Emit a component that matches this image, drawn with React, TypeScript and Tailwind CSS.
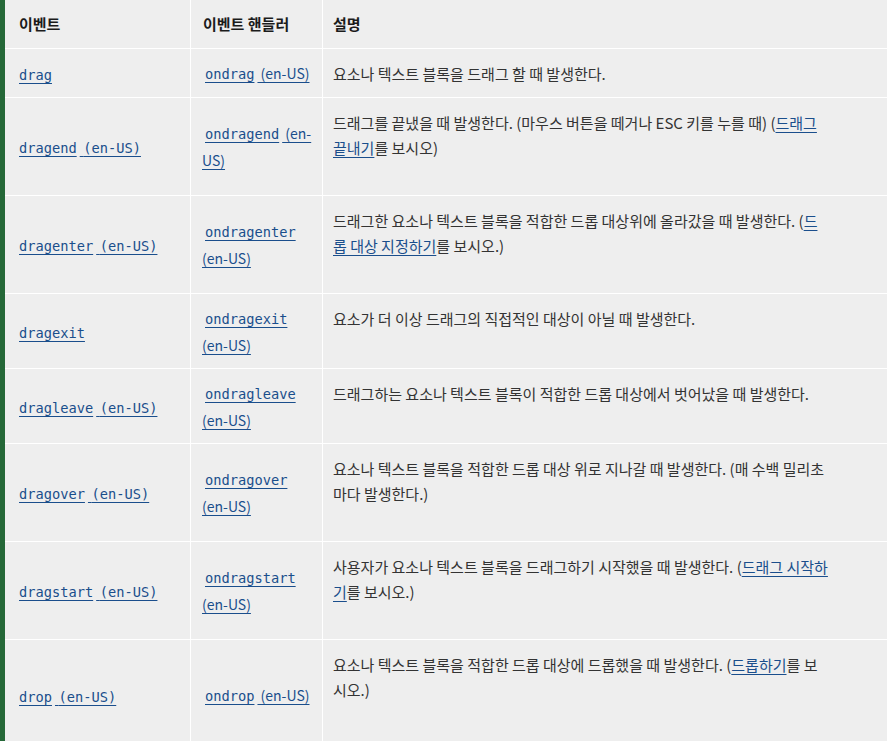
import React from "react";

type Row = {
  event: string;
  eventEn: boolean;
  handler: string;
  desc: React.ReactNode;
};

const link = "text-[#1a4e8c] underline underline-offset-[3px] decoration-1";
const mono = "px-[3px] font-['DejaVu_Sans_Mono',monospace] text-[13.7px]";

const L = ({ children }: { children: React.ReactNode }) => <a className={link}>{children}</a>;

const rows: Row[] = [
  { event: "drag", eventEn: false, handler: "ondrag", desc: "요소나 텍스트 블록을 드래그 할 때 발생한다." },
  {
    event: "dragend",
    eventEn: true,
    handler: "ondragend",
    desc: (
      <>
        드래그를 끝냈을 때 발생한다. (마우스 버튼을 떼거나 ESC 키를 누를 때) (<L>드래그 끝내기</L>를 보시오)
      </>
    ),
  },
  {
    event: "dragenter",
    eventEn: true,
    handler: "ondragenter",
    desc: (
      <>
        드래그한 요소나 텍스트 블록을 적합한 드롭 대상위에 올라갔을 때 발생한다. (<L>드롭 대상 지정하기</L>를 보시오.)
      </>
    ),
  },
  { event: "dragexit", eventEn: false, handler: "ondragexit", desc: "요소가 더 이상 드래그의 직접적인 대상이 아닐 때 발생한다." },
  {
    event: "dragleave",
    eventEn: true,
    handler: "ondragleave",
    desc: "드래그하는 요소나 텍스트 블록이 적합한 드롭 대상에서 벗어났을 때 발생한다.",
  },
  {
    event: "dragover",
    eventEn: true,
    handler: "ondragover",
    desc: "요소나 텍스트 블록을 적합한 드롭 대상 위로 지나갈 때 발생한다. (매 수백 밀리초마다 발생한다.)",
  },
  {
    event: "dragstart",
    eventEn: true,
    handler: "ondragstart",
    desc: (
      <>
        사용자가 요소나 텍스트 블록을 드래그하기 시작했을 때 발생한다. (<L>드래그 시작하기</L>를 보시오.)
      </>
    ),
  },
  {
    event: "drop",
    eventEn: true,
    handler: "ondrop",
    desc: (
      <>
        요소나 텍스트 블록을 적합한 드롭 대상에 드롭했을 때 발생한다. (<L>드롭하기</L>를 보시오.)
      </>
    ),
  },
];

export default function App() {
  return (
    <div className="flex w-[887px] h-[741px] overflow-hidden bg-white font-['Noto_Sans_CJK_KR',sans-serif]">
      <div className="w-[5px] shrink-0 bg-[#256838]" />
      <div className="grid flex-1 grid-cols-[185px_131px_1fr] grid-rows-[48px_48px_97px_97px_74px_74px_97px_97px_110px] gap-px bg-white">
        <div className="flex items-center bg-[#eeeeee] pl-[14px] pr-3 text-[15px] font-bold text-[#1b1b1b]">이벤트</div>
        <div className="flex items-center bg-[#eeeeee] pl-3 pr-3 text-[15px] font-bold text-[#1b1b1b]">이벤트 핸들러</div>
        <div className="flex items-center bg-[#eeeeee] pl-[10px] pr-3 text-[15px] font-bold text-[#1b1b1b]">설명</div>
        {rows.map((r) => (
          <React.Fragment key={r.event}>
            <div className="flex items-center bg-[#eeeeee] pl-[11px] pr-2">
              <a className={link}>
                <code className={mono}>{r.event}</code>
                {r.eventEn && (
                  <>
                    {" "}
                    <code className="font-['DejaVu_Sans_Mono',monospace] text-[13.7px]">(en-US)</code>
                  </>
                )}
              </a>
            </div>
            <div className="flex items-center bg-[#eeeeee] pl-[11px] pr-2">
              <p className="text-[14px] leading-[26px] text-[#333]">
                <a className={link}>
                  <code className={mono}>{r.handler}</code> (en-US)
                </a>
              </p>
            </div>
            <div className="bg-[#eeeeee] pl-[10px] pr-[58px] pt-3">
              <p className="text-[15px] leading-[25px] text-[#333]">{r.desc}</p>
            </div>
          </React.Fragment>
        ))}
      </div>
    </div>
  );
}
